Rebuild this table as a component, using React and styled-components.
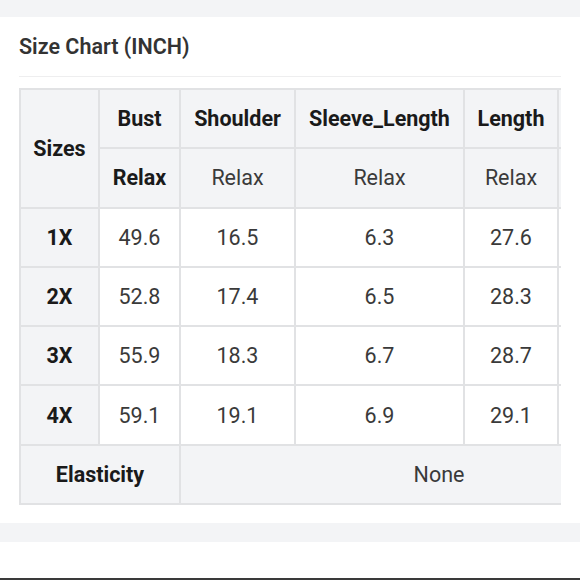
import React from 'react'
import styled, { createGlobalStyle } from 'styled-components'

const GlobalStyle = createGlobalStyle`
  body {
    margin: 0;
    background: #ffffff;
    font-family: Roboto, "Liberation Sans", Arial, sans-serif;
  }
`

const Page = styled.div`
  width: 580px;
  height: 580px;
  display: flex;
  flex-direction: column;
  overflow: hidden;
`

const Band = styled.div`
  height: ${props => props.h}px;
  background: #f3f4f6;
  flex-shrink: 0;
`

const Card = styled.section`
  padding: 0 19px 18px 19px;
`

const Title = styled.h2`
  margin: 0;
  height: 59px;
  display: flex;
  align-items: center;
  font-size: 21.5px;
  font-weight: 600;
  color: #333333;
  border-bottom: 1px solid #eeeeef;
`

const Scroller = styled.div`
  margin-top: 11px;
  width: 542px;
  overflow: hidden;
`

const Table = styled.table`
  border-collapse: collapse;
  table-layout: fixed;
  width: 678px;
  font-size: 21.5px;
`

const Row = styled.tr`
  height: 59.3px;
`

const Cell = styled.td`
  border: 2px solid #e1e2e4;
  text-align: center;
  vertical-align: middle;
  padding: 0;
  background: ${props => (props.shade ? '#f3f4f6' : '#ffffff')};
  color: ${props => (props.bold ? '#1a1a1a' : '#3a3a3a')};
  font-weight: ${props => (props.bold ? 700 : 400)};
  white-space: nowrap;
`

const Footer = styled.div`
  flex: 1;
  border-bottom: 2px solid #3a3a3a;
`

const columns = ['Bust', 'Shoulder', 'Sleeve_Length', 'Length', '']
const widths = [79, 81, 115, 169, 94, 140]

const rows = [
  ['1X', '49.6', '16.5', '6.3', '27.6', ''],
  ['2X', '52.8', '17.4', '6.5', '28.3', ''],
  ['3X', '55.9', '18.3', '6.7', '28.7', ''],
  ['4X', '59.1', '19.1', '6.9', '29.1', ''],
]

const App = () => (
  <Page>
    <GlobalStyle />
    <Band h={17} />
    <Card>
      <Title>Size Chart (INCH)</Title>
      <Scroller>
        <Table>
          <colgroup>
            {widths.map((w, i) => <col key={i} style={{ width: w }} />)}
          </colgroup>
          <tbody>
            <Row>
              <Cell rowSpan={2} shade bold>Sizes</Cell>
              {columns.map((c, i) => <Cell key={i} shade bold>{c}</Cell>)}
            </Row>
            <Row>
              <Cell shade bold>Relax</Cell>
              <Cell shade>Relax</Cell>
              <Cell shade>Relax</Cell>
              <Cell shade>Relax</Cell>
              <Cell shade></Cell>
            </Row>
            {rows.map(r => (
              <Row key={r[0]}>
                <Cell shade bold>{r[0]}</Cell>
                {r.slice(1).map((v, i) => <Cell key={i}>{v}</Cell>)}
              </Row>
            ))}
            <Row>
              <Cell colSpan={2} shade bold>Elasticity</Cell>
              <Cell colSpan={4} shade>None</Cell>
            </Row>
          </tbody>
        </Table>
      </Scroller>
    </Card>
    <Band h={19} />
    <Footer />
  </Page>
)

export default App
